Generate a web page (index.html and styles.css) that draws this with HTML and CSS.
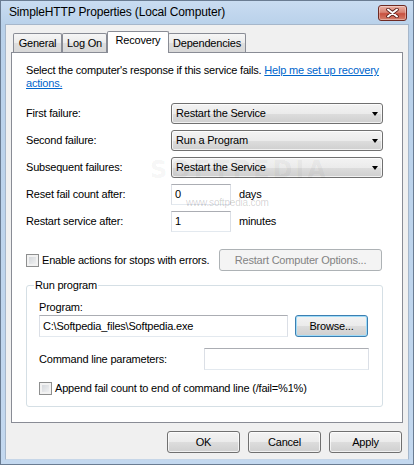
FILE: index.html
```html
<!DOCTYPE html>
<html lang="en">
<head>
    <meta charset="UTF-8">
    <title>SimpleHTTP Properties (Local Computer)</title>
    <link rel="stylesheet" href="styles.css">
</head>
<body>
    <div class="window">
        <div class="titlebar">
            <span class="title">SimpleHTTP Properties (Local Computer)</span>
            <span class="close">
                <svg width="13" height="10" viewBox="0 0 13 10">
                    <path d="M2 1.5 L11 8.5 M11 1.5 L2 8.5" stroke="#5a1f1a" stroke-width="3.6" stroke-linecap="round"/>
                    <path d="M2 1.5 L11 8.5 M11 1.5 L2 8.5" stroke="#fff" stroke-width="2" stroke-linecap="round"/>
                </svg>
            </span>
        </div>

        <div class="client">
            <div class="tabs">
                <div class="tab tab-general">General</div>
                <div class="tab tab-logon">Log On</div>
                <div class="tab tab-recovery active">Recovery</div>
                <div class="tab tab-deps">Dependencies</div>
            </div>

            <div class="panel">
                <p class="intro">Select the computer's response if this service fails. <a href="#">Help me set up recovery actions.</a></p>

                <div class="form">
                    <span>First failure:</span>
                    <div class="combo">Restart the Service<span class="arrow"></span></div>

                    <span>Second failure:</span>
                    <div class="combo">Run a Program<span class="arrow"></span></div>

                    <span>Subsequent failures:</span>
                    <div class="combo">Restart the Service<span class="arrow"></span></div>

                    <span>Reset fail count after:</span>
                    <div class="field-row"><div class="textbox short">0</div><span class="unit">days</span></div>

                    <span>Restart service after:</span>
                    <div class="field-row"><div class="textbox short">1</div><span class="unit">minutes</span></div>
                </div>

                <div class="errors-row">
                    <span class="check"><span class="box"></span>Enable actions for stops with errors.</span>
                    <span class="btn disabled restart-btn">Restart Computer Options...</span>
                </div>

                <fieldset class="group">
                    <legend>Run program</legend>
                    <div class="grp-label">Program:</div>
                    <div class="program-row">
                        <div class="textbox program">C:\Softpedia_files\Softpedia.exe</div>
                        <span class="btn default browse-btn">Browse...</span>
                    </div>
                    <div class="cmd-row">
                        <span class="cmd-label">Command line parameters:</span>
                        <div class="textbox cmd"></div>
                    </div>
                    <div class="append-row">
                        <span class="check"><span class="box"></span>Append fail count to end of command line (/fail=%1%)</span>
                    </div>
                </fieldset>

                <div class="watermark">SOFTPEDIA</div>
                <div class="watermark-url">www.softpedia.com</div>
            </div>

            <div class="footer">
                <span class="btn">OK</span>
                <span class="btn">Cancel</span>
                <span class="btn">Apply</span>
            </div>
        </div>
    </div>
</body>
</html>
```

FILE: styles.css
```css
* {
    box-sizing: border-box;
}
body {
    margin: 0;
    font-family: "Liberation Sans", Arial, sans-serif;
    font-size: 11px;
    letter-spacing: -0.2px;
    line-height: 13px;
    color: #000;
    background: #fff;
}
.window {
    width: 414px;
    height: 465px;
    border: 1px solid #6a7c92;
    background: linear-gradient(#c9dcf1, #b9d1ea 24px, #c3d8ef);
    padding: 0 4px 4px;
    display: flex;
    flex-direction: column;
}
.titlebar {
    height: 23px;
    display: flex;
    align-items: center;
    justify-content: space-between;
    padding-left: 4px;
}
.title {
    font-size: 12px;
    letter-spacing: -0.15px;
}
.close {
    width: 29px;
    height: 16px;
    margin-right: 2px;
    margin-top: 1px;
    border: 1px solid #6e2a23;
    border-radius: 3px;
    background: linear-gradient(#eab0a4, #d98474 45%, #c8503f 55%, #d5806c);
    box-shadow: inset 0 0 0 1px rgba(255,255,255,0.35);
    display: flex;
    align-items: center;
    justify-content: center;
}
.client {
    flex: 1;
    background: #f0f0f0;
    border: 1px solid #a6b7cb;
    border-bottom-color: #c6d6e8;
    padding-top: 6px;
}

/* tabs */
.tabs {
    display: flex;
    align-items: flex-end;
    height: 21px;
    margin-left: 7px;
    position: relative;
    z-index: 1;
}
.tab {
    height: 19px;
    border: 1px solid #898c95;
    border-bottom: none;
    border-radius: 2px 2px 0 0;
    background: linear-gradient(#f6f6f6, #ebebeb 50%, #dedede 51%, #d8d8d8);
    text-align: center;
    padding-top: 3px;
}
.tab-general { width: 49px; }
.tab-logon { width: 45px; }
.tab-recovery { width: 62px; }
.tab-deps { width: 78px; margin-left: -1px; }
.tab.active {
    height: 22px;
    margin-bottom: -1px;
    background: #fff;
    position: relative;
    z-index: 2;
    padding-top: 2px;
}

/* panel */
.panel {
    height: 371px;
    margin: 0 5px;
    border: 1px solid #898c95;
    background: #fff;
    padding: 11px 19px 0 14px;
    position: relative;
}
.intro {
    margin: 0;
}
.intro a {
    color: #0066cc;
}
.form {
    display: grid;
    grid-template-columns: 145px 212px;
    grid-auto-rows: 21px;
    row-gap: 6px;
    align-items: center;
    margin-top: 13px;
}
.combo {
    height: 21px;
    border: 1px solid #707070;
    border-radius: 3px;
    background: linear-gradient(#f3f3f3, #ebebeb 50%, #dddddd 51%, #cfcfcf);
    box-shadow: inset 0 0 0 1px rgba(255,255,255,0.7);
    display: flex;
    align-items: center;
    padding-left: 4px;
}
.arrow {
    margin-left: auto;
    margin-right: 4px;
    border-top: 4px solid #000;
    border-left: 3.5px solid transparent;
    border-right: 3.5px solid transparent;
}
.field-row {
    display: flex;
    align-items: center;
}
.textbox {
    height: 21px;
    border: 1px solid #dbdfe6;
    border-top-color: #abadb3;
    border-bottom-color: #e3e9ef;
    background: #fff;
    padding-left: 3px;
    display: flex;
    align-items: center;
}
.short {
    width: 60px;
}
.unit {
    margin-left: 8px;
}

/* checkboxes and buttons */
.check {
    display: flex;
    align-items: center;
}
.box {
    width: 13px;
    height: 13px;
    margin-right: 3px;
    border: 1px solid #8e8f8f;
    background: linear-gradient(135deg, #cdd1d6, #f7f7f7);
    box-shadow: inset 0 0 0 2px #f2f2f2;
}
.btn {
    width: 73px;
    height: 22px;
    border: 1px solid #707070;
    border-radius: 3px;
    background: linear-gradient(#f3f3f3, #ebebeb 50%, #dddddd 51%, #cfcfcf);
    box-shadow: inset 0 0 0 1px rgba(255,255,255,0.7);
    display: flex;
    align-items: center;
    justify-content: center;
}
.btn.default {
    border-color: #3c7fb1;
    box-shadow: inset 0 0 0 1px #9fdbf8;
}
.btn.disabled {
    border-color: #adb2b5;
    background: #f4f4f4;
    box-shadow: none;
    color: #838383;
}
.errors-row {
    display: flex;
    align-items: center;
    margin-top: 17px;
    height: 22px;
}
.restart-btn {
    width: 163px;
    margin-left: auto;
    margin-right: 1px;
}

/* run program group */
.group {
    margin: 8px 0 0;
    padding: 0 13px 11px 12px;
    border: 1px solid #d5dfe5;
    border-radius: 3px;
    min-width: 0;
}
.group legend {
    margin-left: -5px;
    padding: 0 1px;
}
.grp-label {
    margin-top: 9px;
}
.program-row {
    display: flex;
    margin-top: 1px;
}
.textbox.program {
    width: 249px;
    height: 22px;
}
.browse-btn {
    margin-left: 7px;
}
.cmd-row {
    display: flex;
    align-items: center;
    margin-top: 11px;
}
.cmd-label {
    width: 165px;
}
.textbox.cmd {
    width: 165px;
    height: 22px;
}
.append-row {
    margin-top: 12px;
}

/* softpedia watermark */
.watermark {
    position: absolute;
    left: 138px;
    top: 105px;
    font-family: "DejaVu Sans", sans-serif;
    font-size: 24px;
    font-weight: bold;
    letter-spacing: 3px;
    color: rgba(0,0,0,0.05);
    line-height: 24px;
}
.watermark-url {
    position: absolute;
    left: 174px;
    top: 143px;
    font-size: 10px;
    color: rgba(0,0,0,0.18);
}

/* bottom buttons */
.footer {
    display: flex;
    justify-content: flex-end;
    gap: 8px;
    margin-top: 8px;
    padding-right: 6px;
}
```
